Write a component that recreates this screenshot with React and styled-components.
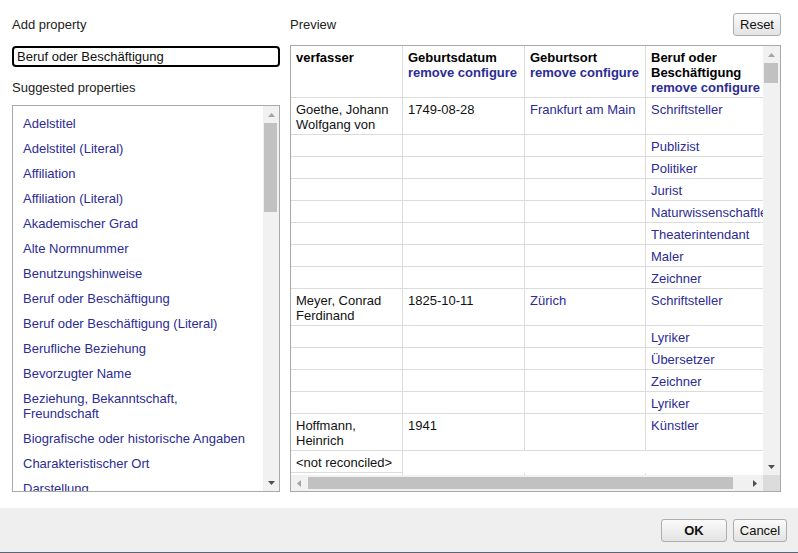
import React from "react";
import styled, { createGlobalStyle } from "styled-components";

const Global = createGlobalStyle`
  html, body { margin: 0; padding: 0; background: #fff; }
  body { font-family: "Liberation Sans", Arial, sans-serif; font-size: 13px; color: #222; }
  * { box-sizing: border-box; }
`;

const LINK = "#2c2c94";

const Page = styled.div`
  width: 798px;
  height: 553px;
  display: flex;
  flex-direction: column;
  overflow: hidden;
`;

const Main = styled.div`
  height: 508px;
  display: flex;
  gap: 10px;
  padding: 0 17px 0 12px;
`;

const LeftCol = styled.div`
  width: 268px;
  display: flex;
  flex-direction: column;
  padding-top: 17px;
`;

const RightCol = styled.div`
  flex: 1;
  display: flex;
  flex-direction: column;
  padding-top: 13px;
`;

const Label = styled.div`
  line-height: 15px;
  height: 15px;
  color: #222;
  margin-top: ${(p) => p.$mt || 0}px;
`;

const TextInput = styled.input`
  margin-top: 14px;
  width: 268px;
  height: 21px;
  border: 2px solid #000;
  border-radius: 4px;
  padding: 0 3px;
  font-family: inherit;
  font-size: 13px;
  color: #111;
  outline: none;
`;

const ListBox = styled.div`
  margin-top: 10px;
  height: 387px;
  border: 1px solid #a9a9a9;
  display: flex;
  overflow: hidden;
`;

const ListItems = styled.div`
  flex: 1;
  padding-top: 5px;
  overflow: hidden;
`;

const ListItem = styled.div`
  padding: 5px 10px;
  line-height: 15px;
  color: ${LINK};
`;

const VScroll = styled.div`
  width: ${(p) => p.$w}px;
  background: #f1f1f1;
  display: flex;
  flex-direction: column;
`;

const HScroll = styled.div`
  height: 16px;
  background: #f1f1f1;
  display: flex;
`;

const ArrowBox = styled.div`
  flex: 0 0 ${(p) => p.$size}px;
  display: flex;
  align-items: center;
  justify-content: center;
`;

const Spacer = styled.div`
  flex: 1;
`;

const VThumb = styled.div`
  margin: ${(p) => p.$top}px 2px 0 1px;
  height: ${(p) => p.$h}px;
  background: #c1c1c1;
`;

const HThumb = styled.div`
  margin: 2px 0 2px 1px;
  width: ${(p) => p.$w}px;
  background: #c1c1c1;
`;

const Corner = styled.div`
  background: #dcdcdc;
`;

const TopRow = styled.div`
  height: 23px;
  display: flex;
  align-items: center;
  justify-content: space-between;
`;

const Button = styled.button`
  height: 23px;
  width: ${(p) => p.$w}px;
  padding: 0;
  border: 1px solid #adadad;
  border-radius: 3px;
  background: linear-gradient(#fbfbfb, #e3e3e3);
  font-family: inherit;
  font-size: 13px;
  font-weight: ${(p) => (p.$bold ? 700 : 400)};
  color: #111;
`;

const TableBox = styled.div`
  margin-top: 9px;
  height: 447px;
  border: 1px solid #a9a9a9;
  display: grid;
  grid-template-columns: 1fr 17px;
  grid-template-rows: 1fr 16px;
  overflow: hidden;
`;

const TableArea = styled.div`
  overflow: hidden;
`;

const Table = styled.table`
  table-layout: fixed;
  width: 485px;
  border-collapse: separate;
  border-spacing: 0;
`;

const Th = styled.th`
  text-align: left;
  vertical-align: top;
  padding: 4px 5px 2px;
  line-height: 15px;
  font-weight: 700;
  color: #000;
  border-right: 1px solid #dcdcdc;
  border-bottom: 1px solid #dcdcdc;
`;

const Td = styled.td`
  vertical-align: top;
  padding: 4px 5px 2px;
  line-height: 15px;
  white-space: nowrap;
  overflow: hidden;
  color: ${(p) => (p.$link ? LINK : "#111")};
  border-right: ${(p) => (p.$bare ? "none" : "1px solid #dcdcdc")};
  border-bottom: ${(p) => (p.$bare ? "none" : "1px solid #dcdcdc")};
`;

const Wrap = styled.div`
  white-space: normal;
`;

const HeadLinks = styled.div`
  white-space: nowrap;
  color: ${LINK};
`;

const Footer = styled.div`
  flex: 1;
  background: #efefef;
  border-bottom: 1px solid #5c6670;
  display: flex;
  justify-content: flex-end;
  align-items: flex-start;
  gap: 6px;
  padding: 11px 11px 0 0;
`;

const Arrow = ({ dir, dark }) => {
  const c = dark ? "#505050" : "#a3a3a3";
  const pts = {
    up: "0,4 3.5,0 7,4",
    down: "0,0 7,0 3.5,4",
    left: "4,0 4,7 0,3.5",
    right: "0,0 0,7 4,3.5",
  }[dir];
  const horiz = dir === "left" || dir === "right";
  return (
    <svg width={horiz ? 4 : 7} height={horiz ? 7 : 4} viewBox={horiz ? "0 0 4 7" : "0 0 7 4"}>
      <polygon points={pts} fill={c} />
    </svg>
  );
};

const suggestions = [
  "Adelstitel",
  "Adelstitel (Literal)",
  "Affiliation",
  "Affiliation (Literal)",
  "Akademischer Grad",
  "Alte Normnummer",
  "Benutzungshinweise",
  "Beruf oder Beschäftigung",
  "Beruf oder Beschäftigung (Literal)",
  "Berufliche Beziehung",
  "Bevorzugter Name",
  ["Beziehung, Bekanntschaft,", "Freundschaft"],
  "Biografische oder historische Angaben",
  "Charakteristischer Ort",
  "Darstellung",
];

const rows = [
  ["Goethe, Johann Wolfgang von", "1749-08-28", "Frankfurt am Main", "Schriftsteller"],
  ["", "", "", "Publizist"],
  ["", "", "", "Politiker"],
  ["", "", "", "Jurist"],
  ["", "", "", "Naturwissenschaftler"],
  ["", "", "", "Theaterintendant"],
  ["", "", "", "Maler"],
  ["", "", "", "Zeichner"],
  ["Meyer, Conrad Ferdinand", "1825-10-11", "Zürich", "Schriftsteller"],
  ["", "", "", "Lyriker"],
  ["", "", "", "Übersetzer"],
  ["", "", "", "Zeichner"],
  ["", "", "", "Lyriker"],
  ["Hoffmann, Heinrich", "1941", "", "Künstler"],
];

const headers = ["Geburtsdatum", "Geburtsort", "Beruf oder Beschäftigung"];

export default function App() {
  return (
    <>
      <Global />
      <Page>
        <Main>
          <LeftCol>
            <Label>Add property</Label>
            <TextInput defaultValue="Beruf oder Beschäftigung" />
            <Label $mt={13}>Suggested properties</Label>
            <ListBox>
              <ListItems>
                {suggestions.map((s, i) => (
                  <ListItem key={i}>
                    {Array.isArray(s) ? (
                      <>
                        {s[0]}
                        <br />
                        {s[1]}
                      </>
                    ) : (
                      s
                    )}
                  </ListItem>
                ))}
              </ListItems>
              <VScroll $w={16}>
                <ArrowBox $size={17}>
                  <Arrow dir="up" />
                </ArrowBox>
                <VThumb $top={0} $h={89} />
                <Spacer />
                <ArrowBox $size={17}>
                  <Arrow dir="down" dark />
                </ArrowBox>
              </VScroll>
            </ListBox>
          </LeftCol>
          <RightCol>
            <TopRow>
              <Label>Preview</Label>
              <Button $w={48}>Reset</Button>
            </TopRow>
            <TableBox>
              <TableArea>
                <Table>
                  <colgroup>
                    <col style={{ width: 112 }} />
                    <col style={{ width: 122 }} />
                    <col style={{ width: 121 }} />
                    <col style={{ width: 130 }} />
                  </colgroup>
                  <thead>
                    <tr>
                      <Th>verfasser</Th>
                      {headers.map((h) => (
                        <Th key={h}>
                          {h}
                          <HeadLinks>remove configure</HeadLinks>
                        </Th>
                      ))}
                    </tr>
                  </thead>
                  <tbody>
                    {rows.map((r, i) => (
                      <tr key={i}>
                        <Td>
                          <Wrap>{r[0]}</Wrap>
                        </Td>
                        <Td>{r[1]}</Td>
                        <Td $link>{r[2]}</Td>
                        <Td $link>{r[3]}</Td>
                      </tr>
                    ))}
                    <tr>
                      <Td>&lt;not reconciled&gt;</Td>
                      <Td $bare></Td>
                      <Td $bare></Td>
                      <Td $bare></Td>
                    </tr>
                    <tr>
                      <Td>&nbsp;</Td>
                      <Td>&nbsp;</Td>
                      <Td>&nbsp;</Td>
                      <Td>&nbsp;</Td>
                    </tr>
                  </tbody>
                </Table>
              </TableArea>
              <VScroll $w={17}>
                <ArrowBox $size={17}>
                  <Arrow dir="up" />
                </ArrowBox>
                <VThumb $top={0} $h={20} />
                <Spacer />
                <ArrowBox $size={17}>
                  <Arrow dir="down" dark />
                </ArrowBox>
              </VScroll>
              <HScroll>
                <ArrowBox $size={16}>
                  <Arrow dir="left" />
                </ArrowBox>
                <HThumb $w={425} />
                <Spacer />
                <ArrowBox $size={17}>
                  <Arrow dir="right" dark />
                </ArrowBox>
              </HScroll>
              <Corner />
            </TableBox>
          </RightCol>
        </Main>
        <Footer>
          <Button $w={66} $bold>
            OK
          </Button>
          <Button $w={54}>Cancel</Button>
        </Footer>
      </Page>
    </>
  );
}
